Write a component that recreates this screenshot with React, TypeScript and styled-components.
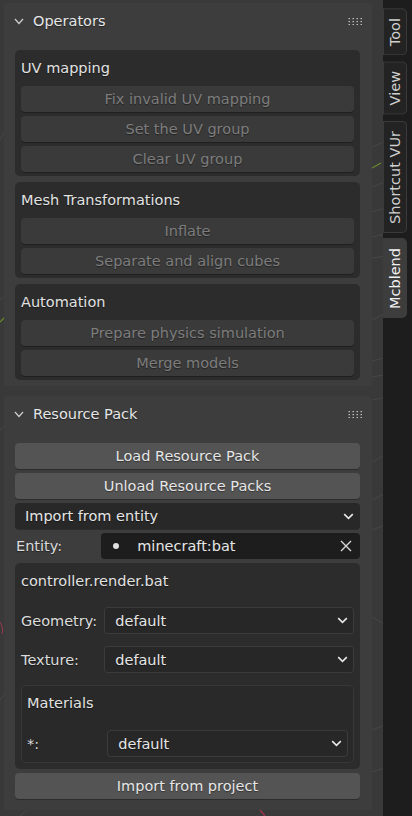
import React from "react";
import styled, { createGlobalStyle, css } from "styled-components";

const Global = createGlobalStyle`
  html, body { margin: 0; padding: 0; background: #383838; }
  body { font-family: "DejaVu Sans", "Noto Sans", sans-serif; }
  * { box-sizing: border-box; }
`;

const Screen = styled.div`
  position: relative;
  width: 412px;
  height: 816px;
  display: flex;
  background: #393939;
  overflow: hidden;
  font-family: "DejaVu Sans", "Noto Sans", sans-serif;
  font-size: 14.5px;
  color: #e0e0e0;
`;

const Backdrop = styled.svg`
  position: absolute;
  inset: 0;
  width: 412px;
  height: 816px;
  pointer-events: none;
`;

const Region = styled.div`
  position: relative;
  width: 383px;
  padding: 3px 11px 0 4px;
  display: flex;
  flex-direction: column;
  gap: 10px;
`;

const Panel = styled.section<{ $padBottom: number }>`
  background: #3d3d3d;
  border-radius: 4px;
  padding-bottom: ${(p) => p.$padBottom}px;
`;

const PanelHeader = styled.header`
  height: 36px;
  display: flex;
  align-items: center;
  padding: 0 10px 0 10px;
`;

const HeaderTitle = styled.span`
  flex: 1;
  margin-left: 9px;
  font-size: 14.5px;
  color: #e6e6e6;
  text-shadow: 0 1px 1px rgba(0, 0, 0, 0.45);
`;

const PanelBody = styled.div`
  padding: 11px 12px 0 11px;
  display: flex;
  flex-direction: column;
  gap: 4px;
`;

const Stack = styled.div<{ $gap: number }>`
  display: flex;
  flex-direction: column;
  gap: ${(p) => p.$gap}px;
`;

const Box = styled.div<{ $padBottom?: number; $gap?: number; $inner?: boolean }>`
  background: ${(p) => (p.$inner ? "#292929" : "#2c2c2c")};
  border-radius: 5px;
  padding: 4px 6px ${(p) => p.$padBottom ?? 4}px;
  display: flex;
  flex-direction: column;
  gap: ${(p) => p.$gap ?? 4}px;
  ${(p) =>
    p.$inner &&
    css`
      box-shadow: inset 0 0 0 1px #383838;
    `}
`;

const BoxLabel = styled.div`
  height: 28px;
  display: flex;
  align-items: center;
  color: #e2e2e2;
  text-shadow: 0 1px 1px rgba(0, 0, 0, 0.45);
`;

const Button = styled.button<{ $enabled?: boolean }>`
  height: 26px;
  width: 100%;
  border: none;
  border-radius: 4px;
  font-family: inherit;
  font-size: 14.5px;
  display: flex;
  align-items: center;
  justify-content: center;
  padding: 0;
  background: ${(p) => (p.$enabled ? "#545454" : "#3a3a3a")};
  color: ${(p) => (p.$enabled ? "#e6e6e6" : "#7d7d7d")};
  box-shadow: 0 1px 0 rgba(0, 0, 0, 0.28);
  text-shadow: 0 1px 1px rgba(0, 0, 0, 0.4);
`;

const Dropdown = styled.div<{ $outlined?: boolean }>`
  height: ${(p) => (p.$outlined ? 27 : 26)}px;
  border-radius: 4px;
  background: ${(p) => (p.$outlined ? "#272727" : "#282828")};
  display: flex;
  align-items: center;
  padding: 0 6px 0 ${(p) => (p.$outlined ? 11 : 10)}px;
  color: #e6e6e6;
  box-shadow: ${(p) =>
    p.$outlined ? "inset 0 0 0 1px #3b3b3b" : "0 1px 0 rgba(0,0,0,0.25)"};
  text-shadow: 0 1px 1px rgba(0, 0, 0, 0.45);
`;

const DropText = styled.span`
  flex: 1;
`;

const PropRow = styled.div`
  display: grid;
  grid-template-columns: 25% 1fr;
  align-items: center;
`;

const PropLabel = styled.span<{ $indent?: number }>`
  padding-left: ${(p) => p.$indent ?? 0}px;
  color: #dcdcdc;
  text-shadow: 0 1px 1px rgba(0, 0, 0, 0.45);
`;

const SearchField = styled.div`
  height: 26px;
  border-radius: 4px;
  background: #1d1d1d;
  display: flex;
  align-items: center;
  padding: 0 8px 0 12px;
  color: #e6e6e6;
`;

const Bullet = styled.span`
  width: 6px;
  height: 6px;
  border-radius: 50%;
  background: #e0e0e0;
  margin-right: 18px;
`;

const TabBar = styled.nav`
  position: relative;
  width: 29px;
  background: #1d1d1d;
  display: flex;
  flex-direction: column;
  gap: 6px;
  padding-top: 8px;
`;

const Tab = styled.div<{ $active?: boolean }>`
  width: 24px;
  padding: 9px 0 10px;
  display: flex;
  align-items: center;
  justify-content: center;
  writing-mode: vertical-rl;
  transform: rotate(180deg);
  font-size: 14.5px;
  border-radius: 5px 0 0 5px;
  background: ${(p) => (p.$active ? "#3d3d3d" : "#232323")};
  color: ${(p) => (p.$active ? "#f0f0f0" : "#cfcfcf")};
  box-shadow: ${(p) => (p.$active ? "none" : "inset 0 0 0 1px #3a3a3a")};
`;

const Chevron = () => (
  <svg width="10" height="7" viewBox="0 0 10 7">
    <polyline points="1,1 5,5.5 9,1" fill="none" stroke="#d0d0d0" strokeWidth="1.2" />
  </svg>
);

const SmallChevron = () => (
  <svg width="11" height="7" viewBox="0 0 11 7">
    <polyline points="1.2,1.2 5.5,5.3 9.8,1.2" fill="none" stroke="#e8e8e8" strokeWidth="1.6" />
  </svg>
);

const Grip = () => (
  <svg width="14" height="7" viewBox="0 0 14 7">
    {[0, 3, 6].map((y) =>
      [0, 4, 8, 12].map((x) => (
        <rect key={`${x}-${y}`} x={x + 0.5} y={y} width="1.5" height="1.2" fill="#bdbdbd" />
      ))
    )}
  </svg>
);

const CloseIcon = () => (
  <svg width="12" height="12" viewBox="0 0 12 12">
    <path d="M1 1 L11 11 M11 1 L1 11" stroke="#d8d8d8" strokeWidth="1.4" />
  </svg>
);

const PanelHead: React.FC<{ title: string }> = ({ title }) => (
  <PanelHeader>
    <Chevron />
    <HeaderTitle>{title}</HeaderTitle>
    <Grip />
  </PanelHeader>
);

const groups = [
  { label: "UV mapping", items: ["Fix invalid UV mapping", "Set the UV group", "Clear UV group"] },
  { label: "Mesh Transformations", items: ["Inflate", "Separate and align cubes"] },
  { label: "Automation", items: ["Prepare physics simulation", "Merge models"] },
];

const gridLines: [number, number, number, number][] = [
  [372, 147, 412, 130],
  [372, 187, 412, 172],
  [372, 212, 412, 200],
  [372, 237, 412, 228],
  [372, 258, 412, 252],
  [372, 320, 412, 300],
  [372, 361, 412, 350],
  [372, 377, 412, 370],
  [372, 400, 412, 392],
  [372, 462, 412, 440],
  [372, 500, 412, 480],
  [372, 530, 412, 515],
  [372, 617, 412, 640],
  [372, 730, 412, 715],
  [372, 772, 412, 760],
  [0, 140, 6, 130],
  [0, 300, 6, 295],
  [0, 430, 6, 425],
  [0, 700, 8, 690],
  [20, 816, 32, 806],
];

export default function App() {
  return (
    <>
      <Global />
      <Screen>
        <Backdrop viewBox="0 0 412 816">
          {gridLines.map(([x1, y1, x2, y2], i) => (
            <line key={i} x1={x1} y1={y1} x2={x2} y2={y2} stroke="#474747" strokeWidth="1" />
          ))}
          <line x1="372" y1="168" x2="381" y2="163" stroke="#6a8a2a" strokeWidth="1.2" />
          <line x1="0" y1="322" x2="4" y2="318" stroke="#6a8a2a" strokeWidth="1.2" />
          <path d="M0 622 Q4 628 2 634" stroke="#8a3a48" strokeWidth="1.2" fill="none" />
          <line x1="260" y1="810" x2="265" y2="816" stroke="#9a3548" strokeWidth="1.4" />
        </Backdrop>
        <Region>
          <Panel $padBottom={6}>
            <PanelHead title="Operators" />
            <PanelBody>
              <Stack $gap={6}>
                {groups.map((g) => (
                  <Box key={g.label}>
                    <BoxLabel>{g.label}</BoxLabel>
                    {g.items.map((it) => (
                      <Button key={it}>{it}</Button>
                    ))}
                  </Box>
                ))}
              </Stack>
            </PanelBody>
          </Panel>
          <Panel $padBottom={11}>
            <PanelHead title="Resource Pack" />
            <PanelBody>
              <Button $enabled>Load Resource Pack</Button>
              <Button $enabled>Unload Resource Packs</Button>
              <Dropdown>
                <DropText>Import from entity</DropText>
                <SmallChevron />
              </Dropdown>
              <PropRow>
                <PropLabel $indent={1}>Entity:</PropLabel>
                <SearchField>
                  <Bullet />
                  <DropText>minecraft:bat</DropText>
                  <CloseIcon />
                </SearchField>
              </PropRow>
              <Box $gap={12} $padBottom={6}>
                <BoxLabel>controller.render.bat</BoxLabel>
                <PropRow>
                  <PropLabel>Geometry:</PropLabel>
                  <Dropdown $outlined>
                    <DropText>default</DropText>
                    <SmallChevron />
                  </Dropdown>
                </PropRow>
                <PropRow>
                  <PropLabel>Texture:</PropLabel>
                  <Dropdown $outlined>
                    <DropText>default</DropText>
                    <SmallChevron />
                  </Dropdown>
                </PropRow>
                <Box $inner $gap={13} $padBottom={6}>
                  <BoxLabel>Materials</BoxLabel>
                  <PropRow>
                    <PropLabel>*:</PropLabel>
                    <Dropdown $outlined>
                      <DropText>default</DropText>
                      <SmallChevron />
                    </Dropdown>
                  </PropRow>
                </Box>
              </Box>
              <Button $enabled>Import from project</Button>
            </PanelBody>
          </Panel>
        </Region>
        <TabBar>
          <Tab>Tool</Tab>
          <Tab>View</Tab>
          <Tab>Shortcut VUr</Tab>
          <Tab $active>Mcblend</Tab>
        </TabBar>
      </Screen>
    </>
  );
}
